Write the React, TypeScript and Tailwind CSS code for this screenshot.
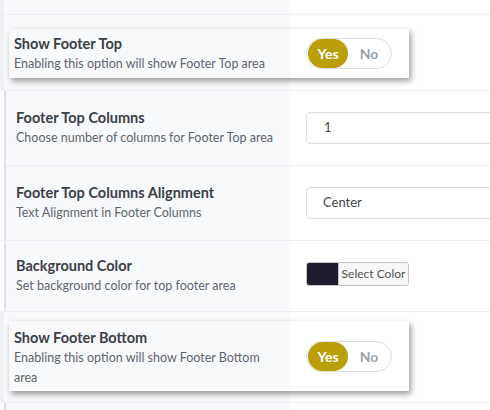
import { ReactNode } from 'react';

const font = { fontFamily: 'Lato, "Open Sans", sans-serif' };

const Toggle = () => (
  <div className="flex items-center w-[86px] h-[31px] rounded-full border border-[#dedede] bg-white p-[1px]">
    <span className="flex items-center justify-center w-[40px] h-[29px] rounded-full bg-[#b9a00b] text-white text-[14px] font-bold">
      Yes
    </span>
    <span className="flex-1 text-center text-[14px] font-bold text-[#9aa2ab]">No</span>
  </div>
);

const Label = ({ title, desc }: { title: string; desc: string }) => (
  <div>
    <div className="text-[14.5px] leading-[20px] font-bold text-[#3b4048]">{title}</div>
    <div className="text-[12.5px] leading-[20px] text-[#5f656e]">{desc}</div>
  </div>
);

const Row = ({ title, desc, height, children }: { title: string; desc: string; height: string; children: ReactNode }) => (
  <div className={`flex border-b border-[#eceef1] ${height}`}>
    <div className="w-[4px] shrink-0 bg-white" />
    <div className="w-[286px] shrink-0 flex items-center bg-[#f8f9fb] border-l-2 border-[#dde1ea] pl-[10px]">
      <Label title={title} desc={desc} />
    </div>
    <div className="flex-1 flex items-center pl-4 bg-white">{children}</div>
  </div>
);

const CardRow = ({ title, desc, rowClass, cardClass, labelClass = '' }: { title: string; desc: string; rowClass: string; cardClass: string; labelClass?: string }) => (
  <div className={`flex border-b border-[#eceef1] bg-[linear-gradient(to_right,#eef0f4_4px,#f8f9fb_4px,#f8f9fb_290px,#ffffff_290px)] ${rowClass}`}>
    <div className={`ml-[9px] w-[400px] flex shadow-[2px_3px_6px_rgba(0,0,0,0.4)] ${cardClass}`}>
      <div className={`w-[281px] shrink-0 flex items-center bg-[#f8f9fb] pl-[5px] pr-[14px] ${labelClass}`}>
        <Label title={title} desc={desc} />
      </div>
      <div className="flex-1 flex items-center pl-4 bg-white">
        <Toggle />
      </div>
    </div>
  </div>
);

export default function App() {
  return (
    <div className="w-[490px] h-[410px] overflow-hidden bg-white" style={font}>
      <div className="flex h-[15px] border-b border-[#eceef1]">
        <div className="w-[290px] bg-[linear-gradient(to_right,#eef0f4_4px,#f8f9fb_4px)]" />
        <div className="flex-1 bg-white" />
      </div>

      <CardRow
        title="Show Footer Top"
        desc="Enabling this option will show Footer Top area"
        rowClass="h-[76px] pt-[14px]"
        cardClass="h-[49px]"
      />

      <Row title="Footer Top Columns" desc="Choose number of columns for Footer Top area" height="h-[75px]">
        <div className="w-[260px] h-[32px] shrink-0 rounded border border-[#dcdfe4] flex items-center pl-[17px] text-[13px] text-[#444]">
          1
        </div>
      </Row>

      <Row title="Footer Top Columns Alignment" desc="Text Alignment in Footer Columns" height="h-[75px]">
        <div className="w-[260px] h-[32px] shrink-0 rounded border border-[#dcdfe4] flex items-center pl-[16px] text-[13px] text-[#444]">
          Center
        </div>
      </Row>

      <Row title="Background Color" desc="Set background color for top footer area" height="h-[71px]">
        <div className="flex h-[24px] w-[103px] rounded-[3px] border border-[#c4c4c4] overflow-hidden -mt-[5px]">
          <span className="w-[31px] bg-[#1f1b2e]" />
          <span className="flex-1 flex items-center justify-center bg-[#f7f7f7] border-l border-[#c4c4c4] text-[12px] text-[#555]">
            Select Color
          </span>
        </div>
      </Row>

      <CardRow
        title="Show Footer Bottom"
        desc="Enabling this option will show Footer Bottom area"
        rowClass="h-[91px] pt-[9px]"
        cardClass="h-[70px]"
        labelClass="pt-[4px]"
      />

      <div className="flex h-[8px]">
        <div className="w-[4px] bg-white" />
        <div className="w-[286px] bg-[#f8f9fb] border-l-2 border-[#dde1ea]" />
        <div className="flex-1 bg-white" />
      </div>
    </div>
  );
}
